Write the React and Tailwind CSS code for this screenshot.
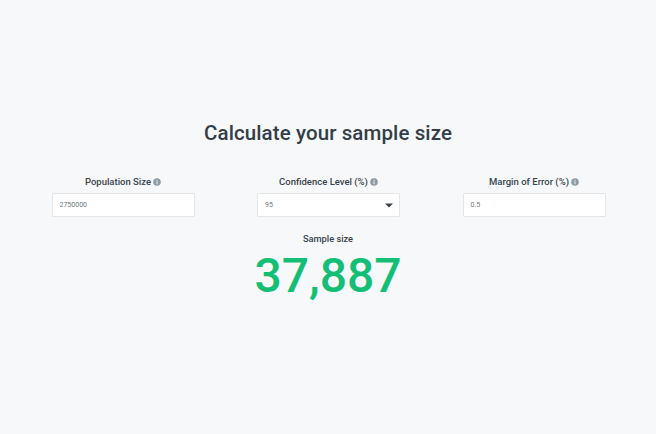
import React from 'react';

const font = 'font-["Roboto","Liberation_Sans",sans-serif]';

const InfoDot = () => (
  <svg width="8" height="8" viewBox="0 0 8 8" className="ml-[2px] shrink-0">
    <circle cx="4" cy="4" r="3.8" fill="#8f9aa3" />
    <rect x="3.5" y="3.4" width="1" height="2.8" fill="#f6f8fa" />
    <rect x="3.5" y="1.8" width="1" height="1" fill="#f6f8fa" />
  </svg>
);

const Field = ({ label, value, select }) => (
  <div className="w-[143px] flex flex-col items-center">
    <div className="flex items-center h-4 text-[9.5px] font-medium text-[#39444d] whitespace-nowrap">
      {label}
      <InfoDot />
    </div>
    <div className="mt-[3px] w-full h-6 bg-white border border-[#e3e6e8] rounded-[1px] flex items-center justify-between pl-[7px] pr-[6px]">
      <span className="text-[7px] text-[#6b777f]">{value}</span>
      {select && (
        <svg width="8" height="5" viewBox="0 0 8 5">
          <path d="M0 0.5 H8 L4 4.5 Z" fill="#39444d" />
        </svg>
      )}
    </div>
  </div>
);

export default function App() {
  return (
    <div className={`w-[656px] h-[434px] bg-[#f6f8fa] flex flex-col items-center pt-[119px] ${font}`}>
      <h1 className="text-[20.5px] leading-[29px] font-medium tracking-[0.1px] text-[#333e48]">Calculate your sample size</h1>
      <div className="mt-[26px] ml-[1px] w-[554px] flex justify-between">
        <Field label="Population Size" value="2750000" />
        <Field label="Confidence Level (%)" value="95" select />
        <Field label="Margin of Error (%)" value="0.5" />
      </div>
      <div className="mt-[14px] text-[9.25px] leading-4 font-medium text-[#39444d]">Sample size</div>
      <div className="text-[48px] leading-[58px] font-medium text-[#14bf75]">37,887</div>
    </div>
  );
}
